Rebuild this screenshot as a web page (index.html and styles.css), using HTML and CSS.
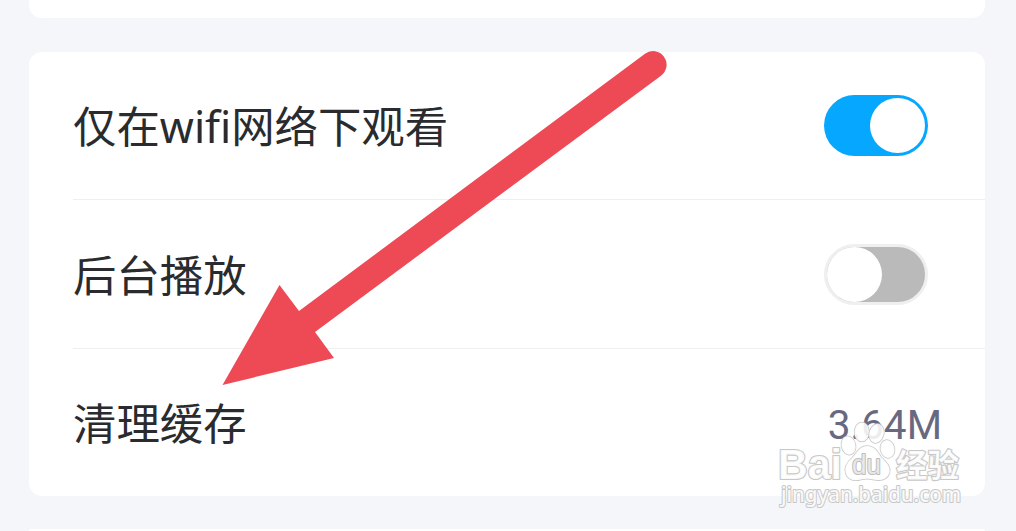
FILE: index.html
```html
<!DOCTYPE html>
<html lang="zh-CN">
<head>
<meta charset="utf-8">
<title>设置</title>
<link rel="stylesheet" href="styles.css">
</head>
<body>
<main class="page">
  <section class="card card-previous"></section>
  <section class="card settings">
    <div class="row"><span class="label">仅在wifi网络下观看</span><span class="switch switch-on"><span class="knob"></span></span></div>
    <div class="row"><span class="label">后台播放</span><span class="switch switch-off"><span class="knob"></span></span></div>
    <div class="row"><span class="label">清理缓存</span><span class="value">3.64M</span></div>
  </section>
  <section class="card card-next"></section>
</main>
<svg class="overlay" viewBox="0 0 1016 531">
  <path class="arrow" d="M645 53.700A13.500 13.500 0 0 1 661 75.700L315 332L334 358L222.500 385L279.500 285L299 311Z"/>
  <g class="watermark">
    <text class="brand" x="778" y="479" textLength="64" lengthAdjust="spacingAndGlyphs">Bai</text>
    <ellipse cx="848.500" cy="445.500" rx="7" ry="9.300" transform="rotate(-12 848.500 445.500)"/>
    <ellipse cx="861.800" cy="432" rx="7.200" ry="9.500"/>
    <ellipse cx="876.500" cy="433.500" rx="7.200" ry="9.500" transform="rotate(15 876.500 433.500)"/>
    <ellipse cx="887.500" cy="449" rx="7" ry="9" transform="rotate(-12 887.500 449)"/>
    <path d="M867 446C859 446 857 453 852 458C846 463 844 468 846 474C849 481 856 481 861 479.500Q867 478 873 479.500C880 481 887 480 889.500 473C891 466 886 462 881 457C877 451 875 446 867 446Z"/>
    <text class="du" x="852" y="474" textLength="29" lengthAdjust="spacingAndGlyphs">du</text>
    <text class="experience" x="896" y="477" textLength="63" lengthAdjust="spacingAndGlyphs">经验</text>
    <text class="site" x="781" y="502" textLength="180" lengthAdjust="spacingAndGlyphs">jingyan.baidu.com</text>
  </g>
</svg>
</body>
</html>
```
FILE: styles.css
```css
body {
  margin: 0;
  background: #f4f6fa;
  overflow: hidden;
}
.page {
  display: flex;
  flex-direction: column;
  height: 531px;
  padding: 0 31px 0 29px;
}
.card {
  flex: none;
  background: #fff;
  border-radius: 13px;
}
.card-previous {
  height: 18px;
  margin-bottom: 34px;
  border-radius: 0 0 13px 13px;
}
.card-next {
  height: 2px;
  margin-top: 33px;
  border-radius: 13px 13px 0 0;
}
.settings {
  height: 444px;
  display: grid;
  grid-template-rows: 148px 149px 147px;
  padding-left: 44px;
}
.row {
  display: flex;
  align-items: center;
  justify-content: space-between;
  padding-right: 57px;
  border-bottom: 1px solid #edeff0;
}
.row:last-child {
  border-bottom: 0;
  padding-right: 43px;
}
.label {
  padding-top: 3px;
  color: #292b2e;
  font: 43.400px/60px "Noto Sans", "Noto Sans CJK SC", sans-serif;
  font-variant-ligatures: none;
}
.value {
  padding-top: 5px;
  color: #686980;
  font: 40.500px/60px Roboto, sans-serif;
}
.switch {
  display: flex;
  box-sizing: border-box;
  width: 104px;
  height: 61px;
  border-radius: 31px;
}
.switch-on {
  background: #06a7ff;
  justify-content: flex-end;
  padding: 3px;
}
.switch-off {
  background: #bababa;
  border: 3px solid #efefef;
}
.knob {
  width: 55px;
  height: 55px;
  border-radius: 50%;
  background: #fff;
}
.overlay {
  position: absolute;
  inset: 0;
  width: 1016px;
  height: 531px;
}
.arrow {
  fill: #ee4a55;
}
.watermark {
  fill: #fff;
  fill-opacity: .88;
  stroke: #c8c8c8;
  stroke-width: 1.500px;
  stroke-linejoin: round;
  paint-order: stroke fill;
}
.brand {
  font: 700 42px "Liberation Sans", sans-serif;
  stroke-width: 2.200px;
}
.du {
  font: 400 27px "Liberation Sans", sans-serif;
  fill: #eee;
  stroke: #bdbdbd;
  stroke-width: 2px;
}
.experience {
  font: 700 32px "Noto Sans CJK SC", sans-serif;
  stroke-width: 2.200px;
}
.site {
  font: 500 21px "Noto Sans", sans-serif;
  stroke-width: 2px;
}
```
